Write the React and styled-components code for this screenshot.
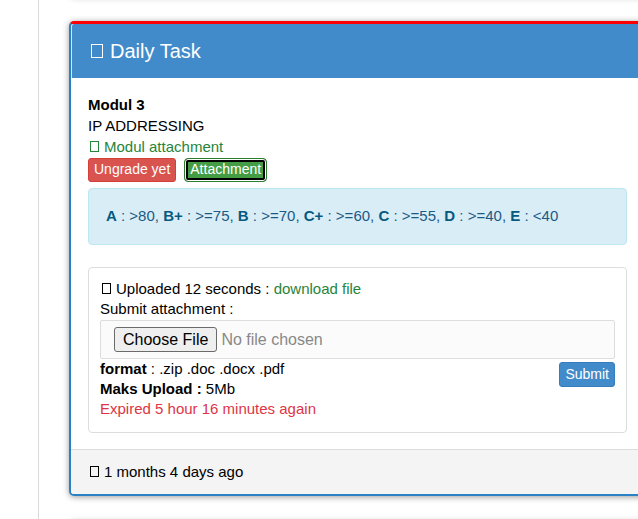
import React from 'react';
import styled, { createGlobalStyle } from 'styled-components';

const GlobalStyle = createGlobalStyle`
  * { box-sizing: border-box; }
  body {
    margin: 0;
    overflow: hidden;
    background: #fff;
    color: #000;
    font: 15px/21px "Liberation Sans", Arial, sans-serif;
  }
`;

const Page = styled.div`
  display: grid;
  grid-template-columns: 39px minmax(0, 1fr);
  height: 100vh;
  overflow: hidden;
`;

const Rail = styled.aside`
  border-right: 1px solid #d9d9d9;
`;

const Feed = styled.main`
  display: flex;
  flex-direction: column;
  gap: 24px;
  margin-right: -8px;
  padding-left: 30px;
`;

const FeedEdge = styled.div`
  flex: none;
  height: 20px;
  margin: ${({ $before }) => ($before ? '-23px 0 0' : '0')};
  border-radius: 5px;
  background: #fff;
  box-shadow: 0 1px 6px rgba(0, 0, 0, 0.2);
`;

const Card = styled.article`
  flex: none;
  border: 2px solid #2a82c4;
  border-top: 3px solid #f00;
  border-radius: 5px;
  background: #fff;
  box-shadow: 0 1px 6px rgba(0, 0, 0, 0.4);
`;

const CardHeader = styled.header`
  display: flex;
  align-items: center;
  gap: 7px;
  height: 54px;
  padding: 0 19px;
  border-left: 1px solid #d5e8f5;
  border-top-left-radius: 3px;
  background: #428bca;
  color: #fff;
`;

const Title = styled.h2`
  margin: 0;
  font-size: 20px;
  font-weight: 400;
  line-height: 24px;
`;

const CardBody = styled.div`
  padding: 16px 17px;
`;

const Line = styled.div`
  color: ${({ $color }) => $color || 'inherit'};
`;

const Glyph = styled.span`
  display: inline-block;
  flex: none;
  width: ${({ $large }) => ($large ? 12 : 9)}px;
  height: ${({ $large }) => ($large ? 14 : 11)}px;
  margin: 0 ${({ $large }) => ($large ? 0 : 5)}px 0 ${({ $large }) => ($large ? 0 : 2)}px;
  border: 1px solid currentColor;
  vertical-align: 0;
`;

const GreenLink = styled.a`
  color: #28843a;
  text-decoration: none;
`;

const Actions = styled.div`
  display: flex;
  gap: 8px;
  margin-top: 1px;
`;

const tones = {
  danger: ['#d9534f', '#d43f3a'],
  success: ['#449d44', '#2b7d2b'],
  primary: ['#428bca', '#357ebd'],
};

const Button = styled.button`
  flex: none;
  height: ${({ $tone }) => ($tone === 'primary' ? 25 : 24)}px;
  padding: 0 5px 2px;
  border: 1px solid ${({ $tone }) => tones[$tone][1]};
  border-radius: ${({ $ring }) => ($ring ? 4 : 3)}px;
  background: ${({ $tone }) => tones[$tone][0]};
  color: #fff;
  font: 14px/20px "Liberation Sans", Arial, sans-serif;
  box-shadow: ${({ $ring }) =>
    $ring ? 'inset 0 0 0 1px #fff, inset 0 0 0 3px #000' : 'none'};
`;

const Grades = styled.p`
  margin: 6px 0 22px;
  padding: 16px 17px 18px;
  border: 1px solid #bce8f1;
  border-radius: 4px;
  background: #d9edf7;
  color: #1b5a85;

  b { color: #065a80; }
`;

const UploadForm = styled.form`
  padding: 11px 11px 13px;
  border: 1px solid #ddd;
  border-radius: 4px;
  line-height: 20px;
`;

const Label = styled.label`
  display: block;
`;

const FileInput = styled.input`
  display: block;
  width: 100%;
  height: 39px;
  margin: 1px 0 0;
  padding: 6px 13px;
  border: 1px solid #ddd;
  border-radius: 2px;
  background: #fbfbfb;
  color: #888;
  font: 16px/19px "Liberation Sans", Arial, sans-serif;

  &::file-selector-button {
    height: 25px;
    margin: 0 4px 0 0;
    padding: 1px 8px;
    border: 1px solid #6b6b6b;
    border-radius: 3px;
    background: #efefef;
    color: #000;
    font: inherit;
  }
`;

const FormFoot = styled.div`
  display: flex;
  justify-content: space-between;
  align-items: flex-start;

  ${Button} { margin-top: 3px; }
`;

const CardFooter = styled.footer`
  padding: 11px 17px 12px;
  border-top: 1px solid #ddd;
  border-radius: 0 0 3px 3px;
  background: #f4f4f4;
`;

const grades = [
  ['A', '>80'],
  ['B+', '>=75'],
  ['B', '>=70'],
  ['C+', '>=60'],
  ['C', '>=55'],
  ['D', '>=40'],
  ['E', '<40'],
];

export default function App() {
  return (
    <>
      <GlobalStyle />
      <Page>
        <Rail />
        <Feed>
          <FeedEdge $before />
          <Card>
            <CardHeader>
              <Glyph $large aria-hidden="true" />
              <Title>Daily Task</Title>
            </CardHeader>
            <CardBody>
              <Line><b>Modul 3</b></Line>
              <Line>IP ADDRESSING</Line>
              <Line>
                <GreenLink href="#modul"><Glyph aria-hidden="true" />Modul attachment</GreenLink>
              </Line>
              <Actions>
                <Button type="button" $tone="danger">Ungrade yet</Button>
                <Button type="button" $tone="success" $ring>Attachment</Button>
              </Actions>
              <Grades>
                {grades.map(([grade, range], i) => (
                  <React.Fragment key={grade}>
                    {i > 0 && ', '}
                    <b>{grade}</b> : {range}
                  </React.Fragment>
                ))}
              </Grades>
              <UploadForm onSubmit={(e) => e.preventDefault()}>
                <Line>
                  <Glyph aria-hidden="true" />Uploaded 12 seconds :{' '}
                  <GreenLink href="#file">download file</GreenLink>
                </Line>
                <Label htmlFor="attachment">Submit attachment :</Label>
                <FileInput id="attachment" type="file" />
                <FormFoot>
                  <div>
                    <Line><b>format</b> : .zip .doc .docx .pdf</Line>
                    <Line><b>Maks Upload :</b> 5Mb</Line>
                    <Line $color="#dc3545">Expired 5 hour 16 minutes again</Line>
                  </div>
                  <Button type="submit" $tone="primary">Submit</Button>
                </FormFoot>
              </UploadForm>
            </CardBody>
            <CardFooter><Glyph aria-hidden="true" />1 months 4 days ago</CardFooter>
          </Card>
          <FeedEdge />
        </Feed>
      </Page>
    </>
  );
}
